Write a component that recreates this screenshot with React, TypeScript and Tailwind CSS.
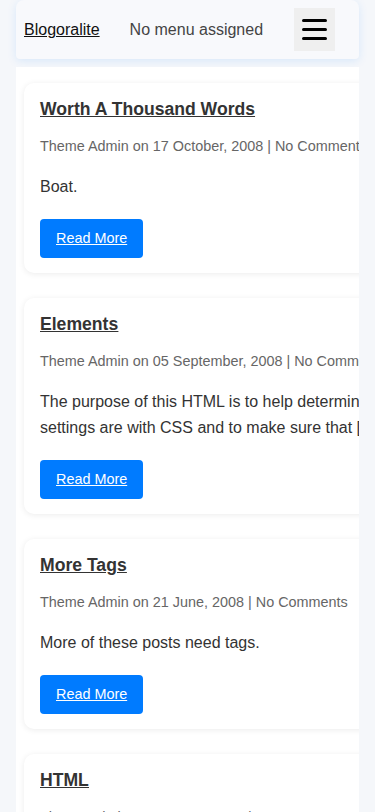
import { Fragment } from "react";

const posts = [
  {
    title: "Worth A Thousand Words",
    date: "17 October, 2008",
    excerpt: "Boat.",
  },
  {
    title: "Elements",
    date: "05 September, 2008",
    excerpt:
      "The purpose of this HTML is to help determine what default settings are with CSS and to make sure that […]",
  },
  {
    title: "More Tags",
    date: "21 June, 2008",
    excerpt: "More of these posts need tags.",
  },
  {
    title: "HTML",
    date: "20 June, 2008",
    excerpt: "Some HTML tags to check.",
  },
];

const Header = () => (
  <header className="flex items-center h-[59px] pl-2 pr-6 bg-[#f8f9fc] rounded-t-lg rounded-b-sm shadow-[0_2px_10px_rgba(0,123,255,0.12)]">
    <a href="#" className="text-base text-[#111] underline">
      Blogoralite
    </a>
    <span className="ml-[30px] text-base text-[#444]">No menu assigned</span>
    <button className="ml-auto flex flex-col items-center justify-center gap-[6px] w-[41px] h-[43px] bg-[#efefef]">
      <span className="block w-[25px] h-[3px] rounded-full bg-black" />
      <span className="block w-[25px] h-[3px] rounded-full bg-black" />
      <span className="block w-[25px] h-[3px] rounded-full bg-black" />
    </button>
  </header>
);

const PostCard = ({ title, date, excerpt }: { title: string; date: string; excerpt: string }) => (
  <article className="w-[472px] shrink-0 mb-[25px] px-4 pt-4 pb-[15px] bg-white rounded-[10px] shadow-[0_1px_6px_rgba(0,0,0,0.08)]">
    <h2 className="text-[17.6px] leading-[20px] font-bold text-[#333] underline">
      <a href="#">{title}</a>
    </h2>
    <p className="mt-4 text-[14.4px] leading-[23px] text-[#666] whitespace-nowrap">
      Theme Admin on {date} | No Comments
    </p>
    <p className="mt-4 text-base leading-[26px] text-[#333]">{excerpt}</p>
    <a
      href="#"
      className="inline-block mt-[19px] px-4 py-[10px] text-[14.4px] leading-[19px] text-white underline bg-[#007bff] rounded"
    >
      Read More
    </a>
  </article>
);

export default function App() {
  return (
    <div
      className="min-h-[812px] bg-[#f5f7fa] px-4"
      style={{ fontFamily: '"Liberation Sans", Arial, sans-serif' }}
    >
      <Header />
      <main className="mt-2 h-[745px] overflow-hidden bg-white pl-2 pt-4">
        {posts.map((p) => (
          <Fragment key={p.title}>
            <PostCard {...p} />
          </Fragment>
        ))}
      </main>
    </div>
  );
}
